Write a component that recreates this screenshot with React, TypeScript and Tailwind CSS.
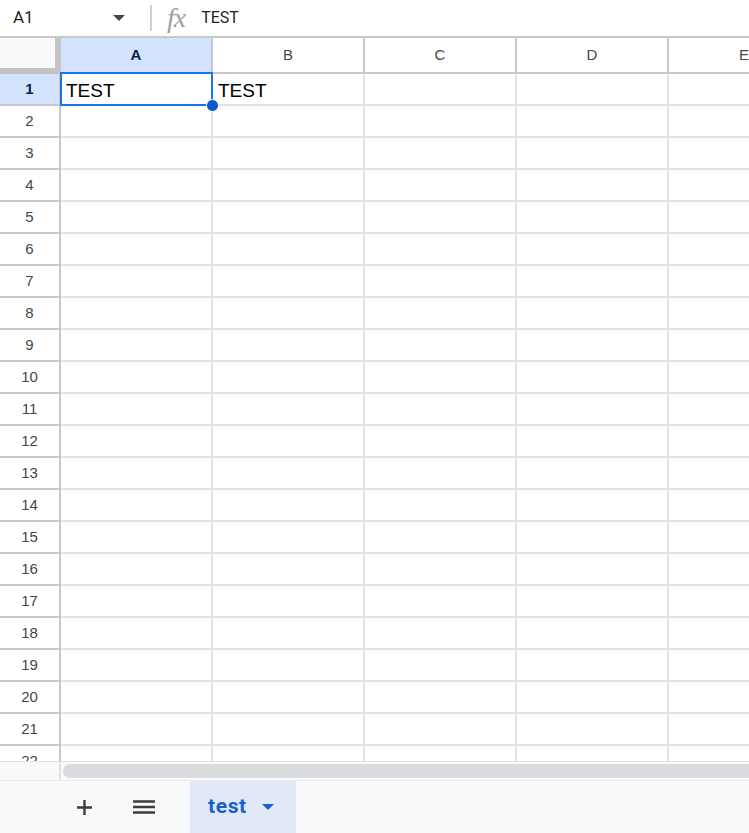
import React from "react";

const cols = ["A", "B", "C", "D", "E"];
const rows = Array.from({ length: 22 }, (_, i) => i + 1);

export default function App() {
  return (
    <div
      className="w-[749px] h-[833px] overflow-hidden bg-white flex flex-col text-[#1f1f1f]"
      style={{ fontFamily: "Roboto, Arial, 'Liberation Sans', sans-serif" }}
    >
      {/* Formula bar */}
      <div className="h-[38px] shrink-0 flex items-center border-b-2 border-[#c8c8c8]">
        <div className="w-[142px] flex items-center pl-[13px] pr-[16px] justify-between">
          <span className="text-[17px] text-[#1f1f1f]">A1</span>
          <svg width="12" height="6" viewBox="0 0 12 6" className="mr-[1px]">
            <path d="M0 0 L12 0 L6 6 Z" fill="#444746" />
          </svg>
        </div>
        <div className="w-[2px] h-[26px] bg-[#d0d0d0] ml-[8px]" />
        <span
          className="ml-[15px] text-[28px] italic text-[#a0a0a0] leading-none tracking-[-1px]"
          style={{ fontFamily: "'Liberation Serif', 'Times New Roman', serif" }}
        >
          fx
        </span>
        <span className="ml-[16px] text-[16px] text-[#1f1f1f]">TEST</span>
      </div>

      {/* Grid */}
      <div className="flex-1 overflow-hidden relative">
        {/* Header row */}
        <div className="flex h-[36px]">
          <div className="w-[61px] shrink-0 bg-[#f8f9fa] border-r-[6px] border-b-[6px] border-[#c4c4c4] box-border" />
          {cols.map((c) => (
            <div
              key={c}
              className={`w-[152px] shrink-0 flex items-center justify-center border-r-2 border-b-2 border-[#c8c8c8] box-border text-[15px] ${
                c === "A" ? "bg-[#d3e3fd] font-bold text-[#0b1f4a]" : "bg-white text-[#444746]"
              }`}
              style={{ fontFamily: "Arial, 'Liberation Sans', sans-serif" }}
            >
              {c}
            </div>
          ))}
        </div>
        {rows.map((r) => (
          <div key={r} className="flex h-[32px]">
            <div
              className={`w-[61px] shrink-0 flex items-center justify-center border-r-2 border-b-2 border-[#c8c8c8] box-border text-[15px] ${
                r === 1 ? "bg-[#d3e3fd] font-bold text-[#0b1f4a]" : "bg-white text-[#444746]"
              }`}
              style={{ fontFamily: "Arial, 'Liberation Sans', sans-serif" }}
            >
              {r}
            </div>
            {cols.map((c) => (
              <div
                key={c}
                className="w-[152px] shrink-0 border-r-2 border-b-2 border-[#e3e3e3] box-border flex items-center pl-[5px] pt-[4px] text-[19px] text-black"
                style={{ fontFamily: "Arial, 'Liberation Sans', sans-serif" }}
              >
                {r === 1 && (c === "A" || c === "B") ? "TEST" : ""}
              </div>
            ))}
          </div>
        ))}
        {/* Selection */}
        <div className="absolute left-[60px] top-[34px] w-[153px] h-[34px] border-2 border-[#1a73e8] pointer-events-none" />
        <div className="absolute left-[206px] top-[61px] w-[13px] h-[13px] rounded-full bg-[#0b57d0] border border-white" />
      </div>

      {/* Scroll bar */}
      <div className="h-[19px] shrink-0 flex bg-[#f8f9fa] border-t border-[#e1e1e1]">
        <div className="w-[61px] border-r-2 border-[#e1e1e1]" />
        <div className="flex-1 pl-[2px] pt-[2px]">
          <div className="h-[14px] bg-[#dadce0] rounded-l-full" />
        </div>
      </div>

      {/* Bottom bar */}
      <div className="h-[53px] shrink-0 bg-[#f8f9fa] border-t border-[#e8eaed] flex items-stretch">
        <div className="w-[190px] flex items-center">
          <svg width="17" height="17" viewBox="0 0 17 17" className="ml-[76px]">
            <path d="M8.5 1 V16 M1 8.5 H16" stroke="#3c3c3c" strokeWidth="2.4" />
          </svg>
          <svg width="22" height="16" viewBox="0 0 22 16" className="ml-[40px]">
            <path d="M0 2.5 H22 M0 8 H22 M0 13.5 H22" stroke="#3c3c3c" strokeWidth="2.4" />
          </svg>
        </div>
        <div className="w-[106px] bg-[#e1e9f7] flex items-center pl-[18px]">
          <span className="text-[21px] font-bold text-[#1a5fd0] tracking-[0.6px]">test</span>
          <svg width="12" height="6" viewBox="0 0 12 6" className="ml-[15px]">
            <path d="M0 0 L12 0 L6 6 Z" fill="#1a5fd0" />
          </svg>
        </div>
      </div>
    </div>
  );
}
